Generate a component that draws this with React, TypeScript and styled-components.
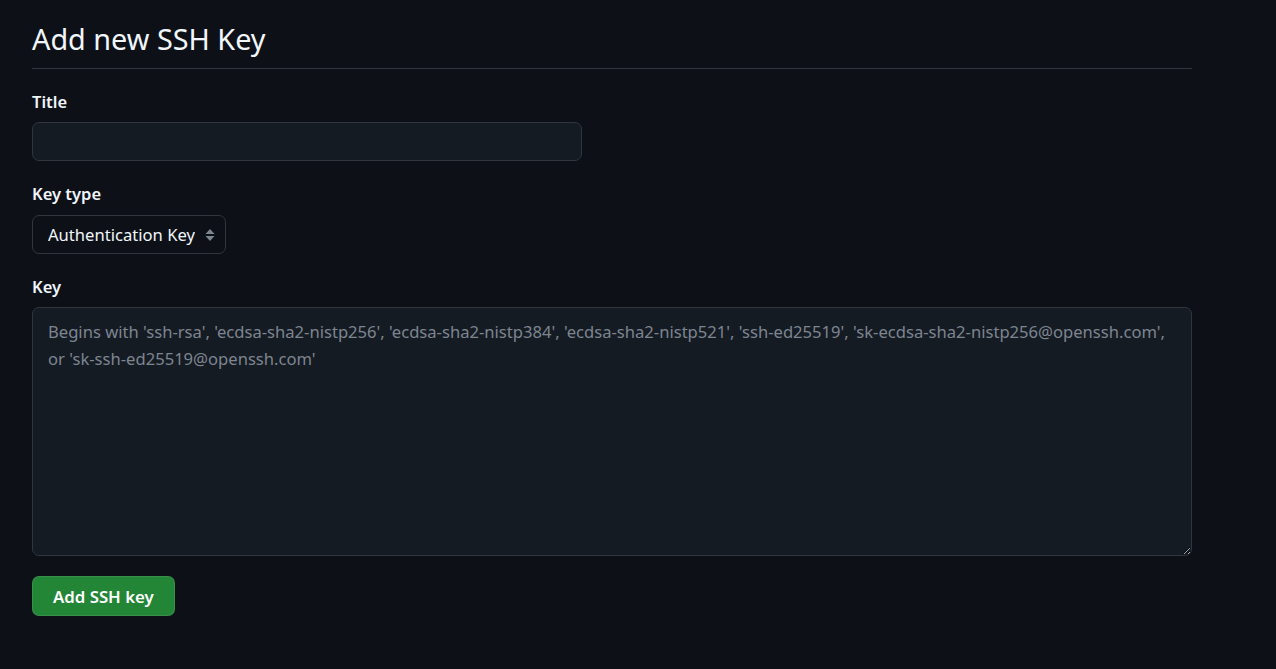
import styled, { createGlobalStyle } from 'styled-components';

const GlobalStyle = createGlobalStyle`
  html, body {
    margin: 0;
    background: #0d1117;
    color: #e6edf3;
    font-family: 'Noto Sans', 'Liberation Sans', sans-serif;
  }
`;

const Page = styled.div`
  width: 1160px;
  padding: 17px 32px 40px;
`;

const Subhead = styled.div`
  border-bottom: 1px solid #30363d;
  padding-bottom: 7px;
  margin-bottom: 20px;
`;

const Heading = styled.h2`
  margin: 0;
  font-size: 28.8px;
  line-height: 44px;
  font-weight: 400;
  color: #f0f6fc;
`;

const FormGroup = styled.div`
  margin-bottom: 20px;
`;

const Label = styled.label`
  display: block;
  font-size: 16.5px;
  line-height: 25px;
  font-weight: 600;
  margin-bottom: 8px;
  color: #f0f6fc;
`;

const fieldBase = `
  box-sizing: border-box;
  background: #151b23;
  border: 1px solid #30363d;
  border-radius: 7px;
  color: #f0f6fc;
  font-family: inherit;
  font-size: 16.6px;
  outline: none;
`;

const TextInput = styled.input`
  ${fieldBase}
  display: block;
  width: 550px;
  height: 39px;
  padding: 0 15px;
`;

const SelectWrap = styled.div`
  position: relative;
  display: inline-block;
  vertical-align: top;
  margin-top: 1px;
`;

const Select = styled.select`
  ${fieldBase}
  display: block;
  appearance: none;
  background: #0d1117;
  height: 39px;
  padding: 0 30px 0 15px;
  cursor: pointer;
`;

const SelectArrow = styled.svg`
  position: absolute;
  right: 10px;
  top: 50%;
  transform: translateY(-50%);
  pointer-events: none;
`;

const TextArea = styled.textarea`
  ${fieldBase}
  display: block;
  width: 1160px;
  height: 249px;
  padding: 11px 15px;
  line-height: 26.5px;
  resize: vertical;

  &::placeholder {
    color: #7d8590;
  }
`;

const PrimaryButton = styled.button`
  box-sizing: border-box;
  height: 40px;
  padding: 0 20px;
  background: #238636;
  border: 1px solid rgba(240, 246, 252, 0.1);
  border-radius: 7px;
  color: #ffffff;
  font-family: inherit;
  font-size: 16.8px;
  font-weight: 600;
  cursor: pointer;
`;

const PLACEHOLDER =
  "Begins with 'ssh-rsa', 'ecdsa-sha2-nistp256', 'ecdsa-sha2-nistp384', 'ecdsa-sha2-nistp521', 'ssh-ed25519', 'sk-ecdsa-sha2-nistp256@openssh.com', or 'sk-ssh-ed25519@openssh.com'";

export default function App() {
  return (
    <Page>
      <GlobalStyle />
      <Subhead>
        <Heading>Add new SSH Key</Heading>
      </Subhead>
      <FormGroup>
        <Label htmlFor="ssh-title">Title</Label>
        <TextInput id="ssh-title" type="text" />
      </FormGroup>
      <FormGroup>
        <Label htmlFor="ssh-type">Key type</Label>
        <SelectWrap>
          <Select id="ssh-type" defaultValue="auth">
            <option value="auth">Authentication Key</option>
            <option value="signing">Signing Key</option>
          </Select>
          <SelectArrow width="12" height="16" viewBox="0 0 12 16">
            <path d="M6 2 L10.5 7 H1.5 Z" fill="#7d8590" />
            <path d="M6 14 L10.5 9 H1.5 Z" fill="#7d8590" />
          </SelectArrow>
        </SelectWrap>
      </FormGroup>
      <FormGroup>
        <Label htmlFor="ssh-key">Key</Label>
        <TextArea id="ssh-key" placeholder={PLACEHOLDER} />
      </FormGroup>
      <PrimaryButton type="submit">Add SSH key</PrimaryButton>
    </Page>
  );
}
